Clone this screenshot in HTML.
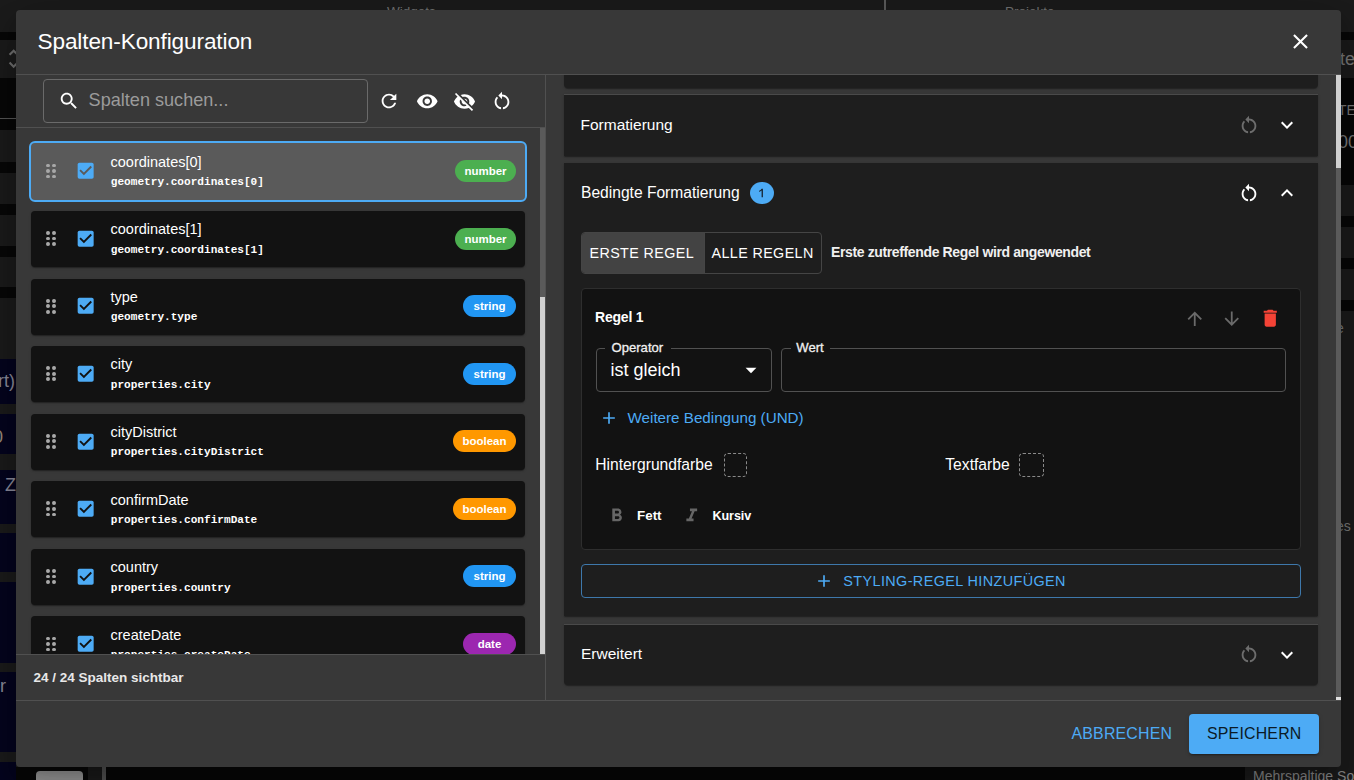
<!DOCTYPE html>
<html><head><meta charset="utf-8"><style>
html,body{margin:0;padding:0;width:1354px;height:780px;overflow:hidden;background:#1b1b1b;font-family:"Liberation Sans",sans-serif}
body div, body svg{position:absolute}
</style></head><body>
<div style="left:0px;top:0px;width:1354px;height:32px;background:#1b1b1b"></div>
<div style="left:387px;top:3.82px;font:400 13.5px/16px 'Liberation Sans', sans-serif;color:#707070;white-space:nowrap;">Widgets</div>
<div style="left:1005px;top:3.82px;font:400 13.5px/16px 'Liberation Sans', sans-serif;color:#707070;white-space:nowrap;">Projekte</div>
<div style="left:884px;top:0px;width:2px;height:10px;background:#5a5a5a"></div>
<div style="left:0px;top:32px;width:1354px;height:8px;background:#080808"></div>
<div style="left:0px;top:40px;width:1354px;height:38px;background:#1b1b1b"></div>
<div style="left:0px;top:78px;width:1354px;height:52px;background:#080808"></div>
<div style="left:0px;top:118px;width:16px;height:1px;background:#555"></div>
<div style="left:0px;top:119px;width:1354px;height:11px;background:#080808"></div>
<div style="left:0px;top:130px;width:16px;height:32px;background:#1b1b1b"></div>
<div style="left:0px;top:162px;width:16px;height:11px;background:#080808"></div>
<div style="left:0px;top:173px;width:16px;height:31px;background:#1b1b1b"></div>
<div style="left:0px;top:204px;width:16px;height:11px;background:#080808"></div>
<div style="left:0px;top:215px;width:16px;height:31px;background:#1b1b1b"></div>
<div style="left:0px;top:246px;width:16px;height:11px;background:#080808"></div>
<div style="left:0px;top:257px;width:16px;height:30px;background:#1b1b1b"></div>
<div style="left:0px;top:287px;width:16px;height:11px;background:#080808"></div>
<div style="left:0px;top:298px;width:16px;height:61px;background:#1b1b1b"></div>
<div style="left:0px;top:359px;width:16px;height:421px;background:#05051e"></div>
<div style="left:0px;top:404px;width:16px;height:10px;background:#1b1b1b"></div>
<div style="left:0px;top:454px;width:16px;height:16px;background:#1b1b1b"></div>
<div style="left:0px;top:524px;width:16px;height:9px;background:#1b1b1b"></div>
<div style="left:0px;top:572px;width:16px;height:10px;background:#1b1b1b"></div>
<div style="left:0px;top:663px;width:16px;height:9px;background:#1b1b1b"></div>
<div style="left:0px;top:752px;width:16px;height:10px;background:#1b1b1b"></div>
<div style="left:1341px;top:130px;width:13px;height:55px;background:#080808"></div>
<div style="left:1341px;top:185px;width:13px;height:595px;background:#1b1b1b"></div>
<div style="left:1341px;top:216px;width:13px;height:11px;background:#080808"></div>
<div style="left:1341px;top:258px;width:13px;height:11px;background:#080808"></div>
<div style="left:1341px;top:300px;width:13px;height:11px;background:#080808"></div>
<div style="left:1340px;top:47.76px;font:400 18px/22px 'Liberation Sans', sans-serif;color:#777;white-space:nowrap;">te</div>
<div style="left:1338px;top:101.65px;font:400 14px/17px 'Liberation Sans', sans-serif;color:#777;white-space:nowrap;">TE</div>
<div style="left:1338px;top:130.76px;font:400 18px/22px 'Liberation Sans', sans-serif;color:#777;white-space:nowrap;">00</div>
<div style="left:1336px;top:319.65px;font:400 14px/17px 'Liberation Sans', sans-serif;color:#777;white-space:nowrap;">e</div>
<div style="left:1336px;top:517.65px;font:400 14px/17px 'Liberation Sans', sans-serif;color:#777;white-space:nowrap;">es</div>
<div style="left:-2px;top:369.76px;font:400 18px/22px 'Liberation Sans', sans-serif;color:#8a8a9a;white-space:nowrap;">rt)</div>
<div style="left:-7px;top:425.76px;font:400 18px/22px 'Liberation Sans', sans-serif;color:#9a8a7a;white-space:nowrap;">0</div>
<div style="left:5px;top:473.76px;font:400 18px/22px 'Liberation Sans', sans-serif;color:#8a8a9a;white-space:nowrap;">Z</div>
<div style="left:0px;top:674.76px;font:400 18px/22px 'Liberation Sans', sans-serif;color:#8a8a9a;white-space:nowrap;">r</div>
<svg style="left:0.7px;top:45.8px;width:25.3px;height:25.3px;" viewBox="0 0 24 24"><path fill="#6f6f6f" d="M12 5.83 15.17 9l1.41-1.41L12 3 7.41 7.59 8.83 9 12 5.83zm0 12.34L8.83 15l-1.42 1.41L12 21l4.59-4.59L15.17 15 12 18.17z"/></svg>
<div style="left:0px;top:767px;width:1354px;height:13px;background:#080808"></div>
<div style="left:0px;top:767px;width:16px;height:13px;background:#05051e"></div>
<div style="left:36px;top:771px;width:47px;height:20px;background:#9a9a9a;border-radius:4px"></div>
<div style="left:88px;top:767px;width:14px;height:13px;background:#1b1b1b"></div>
<div style="left:102px;top:767px;width:4px;height:13px;background:#555"></div>
<div style="left:1245px;top:767px;width:109px;height:13px;background:#1b1b1b"></div>
<div style="left:1253px;top:767.65px;font:400 14px/17px 'Liberation Sans', sans-serif;color:#8a8a8a;white-space:nowrap;">Mehrspaltige Sortierung</div>
<div style="left:16px;top:10px;width:1325px;height:757px;background:#383838;border-radius:4px;box-shadow:0 11px 15px -7px rgba(0,0,0,.2),0 24px 38px 3px rgba(0,0,0,.14),0 9px 46px 8px rgba(0,0,0,.12)"></div>
<div style="left:37.5px;top:27.67px;font:400 22.6px/27px 'Liberation Sans', sans-serif;color:#fff;white-space:nowrap;letter-spacing:-0.12px;">Spalten-Konfiguration</div>
<svg style="left:1288px;top:29px;width:25px;height:25px;" viewBox="0 0 24 24"><path fill="#fff" d="M19 6.41 17.59 5 12 10.59 6.41 5 5 6.41 10.59 12 5 17.59 6.41 19 12 13.41 17.59 19 19 17.59 13.41 12z"/></svg>
<div style="left:16px;top:74px;width:1325px;height:1px;background:#505050"></div>
<div style="left:43px;top:79px;width:323px;height:42px;border:1px solid #6a6a6a;border-radius:4px"></div>
<svg style="left:58px;top:90.2px;width:22px;height:22px;" viewBox="0 0 24 24"><path fill="#fff" d="M15.5 14h-.79l-.28-.27C15.41 12.59 16 11.11 16 9.5 16 5.91 13.09 3 9.5 3S3 5.91 3 9.5 5.91 16 9.5 16c1.61 0 3.09-.59 4.23-1.57l.27.28v.79l5 4.99L20.49 19l-4.99-5zm-6 0C7.01 14 5 11.99 5 9.5S7.01 5 9.5 5 14 7.01 14 9.5 11.99 14 9.5 14z"/></svg>
<div style="left:88.6px;top:89.03px;font:400 18.1px/22px 'Liberation Sans', sans-serif;color:#9b9b9b;white-space:nowrap;">Spalten suchen...</div>
<svg style="left:378.15px;top:90.35px;width:22px;height:22px;" viewBox="0 0 24 24"><path fill="#fff" d="M17.65 6.35C16.2 4.9 14.21 4 12 4c-4.42 0-7.99 3.58-7.99 8s3.57 8 7.99 8c3.73 0 6.84-2.55 7.73-6h-2.08c-.82 2.33-3.04 4-5.65 4-3.31 0-6-2.69-6-6s2.69-6 6-6c1.66 0 3.14.69 4.22 1.78L13 11h7V4l-2.35 2.35z"/></svg>
<svg style="left:416px;top:90px;width:22.5px;height:22.5px;" viewBox="0 0 24 24"><path fill="#fff" d="M12 4.5C7 4.5 2.73 7.61 1 12c1.73 4.39 6 7.5 11 7.5s9.27-3.11 11-7.5c-1.73-4.39-6-7.5-11-7.5zM12 17c-2.76 0-5-2.24-5-5s2.24-5 5-5 5 2.24 5 5-2.24 5-5 5zm0-8c-1.66 0-3 1.34-3 3s1.34 3 3 3 3-1.34 3-3-1.34-3-3-3z"/></svg>
<svg style="left:452.5px;top:89.5px;width:23px;height:23px;" viewBox="0 0 24 24"><path fill="#fff" d="M12 7c2.76 0 5 2.24 5 5 0 .65-.13 1.26-.36 1.83l2.92 2.92c1.51-1.26 2.7-2.89 3.43-4.75-1.73-4.39-6-7.5-11-7.5-1.4 0-2.74.25-3.98.7l2.16 2.16C10.74 7.13 11.35 7 12 7zM2 4.27l2.28 2.28.46.46C3.08 8.3 1.78 10.02 1 12c1.73 4.39 6 7.5 11 7.5 1.55 0 3.03-.3 4.38-.84l.42.42L19.73 22 21 20.73 3.27 3 2 4.27zM7.53 9.8l1.55 1.55c-.05.21-.08.43-.08.65 0 1.66 1.34 3 3 3 .22 0 .44-.03.65-.08l1.55 1.55c-.67.33-1.41.53-2.2.53-2.76 0-5-2.24-5-5 0-.79.2-1.53.53-2.2zm4.31-.78 3.15 3.15.02-.16c0-1.66-1.34-3-3-3l-.17.01z"/></svg>
<svg style="left:491.15px;top:90.2px;width:22px;height:22px;" viewBox="0 0 24 24"><path fill="#fff" d="M12 5V2L8 6l4 4V7c3.31 0 6 2.69 6 6 0 2.97-2.17 5.43-5 5.91v2.02c3.95-.49 7-3.85 7-7.93 0-4.42-3.58-8-8-8zm-6 8c0-1.65.67-3.15 1.76-4.24L6.34 7.34C4.9 8.79 4 10.79 4 13c0 4.08 3.05 7.44 7 7.93v-2.02c-2.83-.48-5-2.94-5-5.91z"/></svg>
<div style="left:16px;top:127px;width:529px;height:1px;background:#505050"></div>
<div style="left:545px;top:75px;width:1px;height:625px;background:#505050"></div>
<div style="left:16px;top:128px;width:524px;height:526px;overflow:hidden">
<div style="left:13px;top:13px;width:498px;height:61px;box-sizing:border-box;border:2px solid #4dabf5;border-radius:6px;background:#5a5a5a"></div>
<div style="left:30.300000000000004px;top:35.599999999999994px;width:3.8px;height:3.8px;background:#a8a8a8;border-radius:50%"></div>
<div style="left:30.300000000000004px;top:41.099999999999994px;width:3.8px;height:3.8px;background:#a8a8a8;border-radius:50%"></div>
<div style="left:30.300000000000004px;top:46.69999999999999px;width:3.8px;height:3.8px;background:#a8a8a8;border-radius:50%"></div>
<div style="left:35.800000000000004px;top:35.599999999999994px;width:3.8px;height:3.8px;background:#a8a8a8;border-radius:50%"></div>
<div style="left:35.800000000000004px;top:41.099999999999994px;width:3.8px;height:3.8px;background:#a8a8a8;border-radius:50%"></div>
<div style="left:35.800000000000004px;top:46.69999999999999px;width:3.8px;height:3.8px;background:#a8a8a8;border-radius:50%"></div>
<svg style="left:59.3px;top:32.30px;width:21.33px;height:21.33px" viewBox="0 0 24 24"><rect x="3" y="3" width="18" height="18" rx="2" fill="#4dabf5"/><path fill="none" stroke="#5a5a5a" stroke-width="2.1" d="M5.7 11.3 10 15.6 18.3 7.3"/></svg>
<div style="left:94.5px;top:25.68px;font:400 14.5px/17px 'Liberation Sans', sans-serif;color:#fff;white-space:nowrap;">coordinates[0]</div>
<div style="left:94.8px;top:48.14px;font:700 11.1px/13px 'Liberation Mono', monospace;color:#fff;white-space:nowrap;">geometry.coordinates[0]</div>
<div style="left:439px;top:32.0px;width:61px;height:22px;background:#4caf50;border-radius:11px"></div>
<div style="left:439px;top:32.00px;width:61px;height:22px;font:700 11.5px/22px 'Liberation Sans',sans-serif;color:#fff;text-align:center">number</div>
<div style="left:15px;top:83px;width:494px;height:56px;background:#121212;border-radius:4px;box-shadow:0 2px 1px -1px rgba(0,0,0,.2),0 1px 1px 0 rgba(0,0,0,.14),0 1px 3px 0 rgba(0,0,0,.12)"></div>
<div style="left:30.300000000000004px;top:103.16999999999999px;width:3.8px;height:3.8px;background:#a8a8a8;border-radius:50%"></div>
<div style="left:30.300000000000004px;top:108.66999999999999px;width:3.8px;height:3.8px;background:#a8a8a8;border-radius:50%"></div>
<div style="left:30.300000000000004px;top:114.26999999999998px;width:3.8px;height:3.8px;background:#a8a8a8;border-radius:50%"></div>
<div style="left:35.800000000000004px;top:103.16999999999999px;width:3.8px;height:3.8px;background:#a8a8a8;border-radius:50%"></div>
<div style="left:35.800000000000004px;top:108.66999999999999px;width:3.8px;height:3.8px;background:#a8a8a8;border-radius:50%"></div>
<div style="left:35.800000000000004px;top:114.26999999999998px;width:3.8px;height:3.8px;background:#a8a8a8;border-radius:50%"></div>
<svg style="left:59.3px;top:99.87px;width:21.33px;height:21.33px" viewBox="0 0 24 24"><rect x="3" y="3" width="18" height="18" rx="2" fill="#4dabf5"/><path fill="none" stroke="#121212" stroke-width="2.1" d="M5.7 11.3 10 15.6 18.3 7.3"/></svg>
<div style="left:94.5px;top:93.25px;font:400 14.5px/17px 'Liberation Sans', sans-serif;color:#fff;white-space:nowrap;">coordinates[1]</div>
<div style="left:94.8px;top:115.71px;font:700 11.1px/13px 'Liberation Mono', monospace;color:#fff;white-space:nowrap;">geometry.coordinates[1]</div>
<div style="left:439px;top:99.57px;width:61px;height:22px;background:#4caf50;border-radius:11px"></div>
<div style="left:439px;top:99.57px;width:61px;height:22px;font:700 11.5px/22px 'Liberation Sans',sans-serif;color:#fff;text-align:center">number</div>
<div style="left:15px;top:151px;width:494px;height:56px;background:#121212;border-radius:4px;box-shadow:0 2px 1px -1px rgba(0,0,0,.2),0 1px 1px 0 rgba(0,0,0,.14),0 1px 3px 0 rgba(0,0,0,.12)"></div>
<div style="left:30.300000000000004px;top:170.74px;width:3.8px;height:3.8px;background:#a8a8a8;border-radius:50%"></div>
<div style="left:30.300000000000004px;top:176.24px;width:3.8px;height:3.8px;background:#a8a8a8;border-radius:50%"></div>
<div style="left:30.300000000000004px;top:181.84000000000003px;width:3.8px;height:3.8px;background:#a8a8a8;border-radius:50%"></div>
<div style="left:35.800000000000004px;top:170.74px;width:3.8px;height:3.8px;background:#a8a8a8;border-radius:50%"></div>
<div style="left:35.800000000000004px;top:176.24px;width:3.8px;height:3.8px;background:#a8a8a8;border-radius:50%"></div>
<div style="left:35.800000000000004px;top:181.84000000000003px;width:3.8px;height:3.8px;background:#a8a8a8;border-radius:50%"></div>
<svg style="left:59.3px;top:167.44px;width:21.33px;height:21.33px" viewBox="0 0 24 24"><rect x="3" y="3" width="18" height="18" rx="2" fill="#4dabf5"/><path fill="none" stroke="#121212" stroke-width="2.1" d="M5.7 11.3 10 15.6 18.3 7.3"/></svg>
<div style="left:94.5px;top:160.82px;font:400 14.5px/17px 'Liberation Sans', sans-serif;color:#fff;white-space:nowrap;">type</div>
<div style="left:94.8px;top:183.28px;font:700 11.1px/13px 'Liberation Mono', monospace;color:#fff;white-space:nowrap;">geometry.type</div>
<div style="left:447px;top:167.14px;width:53px;height:22px;background:#2196f3;border-radius:11px"></div>
<div style="left:447px;top:167.14px;width:53px;height:22px;font:700 11.5px/22px 'Liberation Sans',sans-serif;color:#fff;text-align:center">string</div>
<div style="left:15px;top:218px;width:494px;height:56px;background:#121212;border-radius:4px;box-shadow:0 2px 1px -1px rgba(0,0,0,.2),0 1px 1px 0 rgba(0,0,0,.14),0 1px 3px 0 rgba(0,0,0,.12)"></div>
<div style="left:30.300000000000004px;top:238.31px;width:3.8px;height:3.8px;background:#a8a8a8;border-radius:50%"></div>
<div style="left:30.300000000000004px;top:243.81px;width:3.8px;height:3.8px;background:#a8a8a8;border-radius:50%"></div>
<div style="left:30.300000000000004px;top:249.40999999999997px;width:3.8px;height:3.8px;background:#a8a8a8;border-radius:50%"></div>
<div style="left:35.800000000000004px;top:238.31px;width:3.8px;height:3.8px;background:#a8a8a8;border-radius:50%"></div>
<div style="left:35.800000000000004px;top:243.81px;width:3.8px;height:3.8px;background:#a8a8a8;border-radius:50%"></div>
<div style="left:35.800000000000004px;top:249.40999999999997px;width:3.8px;height:3.8px;background:#a8a8a8;border-radius:50%"></div>
<svg style="left:59.3px;top:235.01px;width:21.33px;height:21.33px" viewBox="0 0 24 24"><rect x="3" y="3" width="18" height="18" rx="2" fill="#4dabf5"/><path fill="none" stroke="#121212" stroke-width="2.1" d="M5.7 11.3 10 15.6 18.3 7.3"/></svg>
<div style="left:94.5px;top:228.39px;font:400 14.5px/17px 'Liberation Sans', sans-serif;color:#fff;white-space:nowrap;">city</div>
<div style="left:94.8px;top:250.85px;font:700 11.1px/13px 'Liberation Mono', monospace;color:#fff;white-space:nowrap;">properties.city</div>
<div style="left:447px;top:234.70999999999998px;width:53px;height:22px;background:#2196f3;border-radius:11px"></div>
<div style="left:447px;top:234.71px;width:53px;height:22px;font:700 11.5px/22px 'Liberation Sans',sans-serif;color:#fff;text-align:center">string</div>
<div style="left:15px;top:286px;width:494px;height:56px;background:#121212;border-radius:4px;box-shadow:0 2px 1px -1px rgba(0,0,0,.2),0 1px 1px 0 rgba(0,0,0,.14),0 1px 3px 0 rgba(0,0,0,.12)"></div>
<div style="left:30.300000000000004px;top:305.88px;width:3.8px;height:3.8px;background:#a8a8a8;border-radius:50%"></div>
<div style="left:30.300000000000004px;top:311.38px;width:3.8px;height:3.8px;background:#a8a8a8;border-radius:50%"></div>
<div style="left:30.300000000000004px;top:316.98px;width:3.8px;height:3.8px;background:#a8a8a8;border-radius:50%"></div>
<div style="left:35.800000000000004px;top:305.88px;width:3.8px;height:3.8px;background:#a8a8a8;border-radius:50%"></div>
<div style="left:35.800000000000004px;top:311.38px;width:3.8px;height:3.8px;background:#a8a8a8;border-radius:50%"></div>
<div style="left:35.800000000000004px;top:316.98px;width:3.8px;height:3.8px;background:#a8a8a8;border-radius:50%"></div>
<svg style="left:59.3px;top:302.58px;width:21.33px;height:21.33px" viewBox="0 0 24 24"><rect x="3" y="3" width="18" height="18" rx="2" fill="#4dabf5"/><path fill="none" stroke="#121212" stroke-width="2.1" d="M5.7 11.3 10 15.6 18.3 7.3"/></svg>
<div style="left:94.5px;top:295.96px;font:400 14.5px/17px 'Liberation Sans', sans-serif;color:#fff;white-space:nowrap;">cityDistrict</div>
<div style="left:94.8px;top:318.42px;font:700 11.1px/13px 'Liberation Mono', monospace;color:#fff;white-space:nowrap;">properties.cityDistrict</div>
<div style="left:437px;top:302.28px;width:63px;height:22px;background:#ff9800;border-radius:11px"></div>
<div style="left:437px;top:302.28px;width:63px;height:22px;font:700 11.5px/22px 'Liberation Sans',sans-serif;color:#fff;text-align:center">boolean</div>
<div style="left:15px;top:353px;width:494px;height:56px;background:#121212;border-radius:4px;box-shadow:0 2px 1px -1px rgba(0,0,0,.2),0 1px 1px 0 rgba(0,0,0,.14),0 1px 3px 0 rgba(0,0,0,.12)"></div>
<div style="left:30.300000000000004px;top:373.45px;width:3.8px;height:3.8px;background:#a8a8a8;border-radius:50%"></div>
<div style="left:30.300000000000004px;top:378.95px;width:3.8px;height:3.8px;background:#a8a8a8;border-radius:50%"></div>
<div style="left:30.300000000000004px;top:384.54999999999995px;width:3.8px;height:3.8px;background:#a8a8a8;border-radius:50%"></div>
<div style="left:35.800000000000004px;top:373.45px;width:3.8px;height:3.8px;background:#a8a8a8;border-radius:50%"></div>
<div style="left:35.800000000000004px;top:378.95px;width:3.8px;height:3.8px;background:#a8a8a8;border-radius:50%"></div>
<div style="left:35.800000000000004px;top:384.54999999999995px;width:3.8px;height:3.8px;background:#a8a8a8;border-radius:50%"></div>
<svg style="left:59.3px;top:370.15px;width:21.33px;height:21.33px" viewBox="0 0 24 24"><rect x="3" y="3" width="18" height="18" rx="2" fill="#4dabf5"/><path fill="none" stroke="#121212" stroke-width="2.1" d="M5.7 11.3 10 15.6 18.3 7.3"/></svg>
<div style="left:94.5px;top:363.53px;font:400 14.5px/17px 'Liberation Sans', sans-serif;color:#fff;white-space:nowrap;">confirmDate</div>
<div style="left:94.8px;top:385.99px;font:700 11.1px/13px 'Liberation Mono', monospace;color:#fff;white-space:nowrap;">properties.confirmDate</div>
<div style="left:437px;top:369.84999999999997px;width:63px;height:22px;background:#ff9800;border-radius:11px"></div>
<div style="left:437px;top:369.85px;width:63px;height:22px;font:700 11.5px/22px 'Liberation Sans',sans-serif;color:#fff;text-align:center">boolean</div>
<div style="left:15px;top:421px;width:494px;height:56px;background:#121212;border-radius:4px;box-shadow:0 2px 1px -1px rgba(0,0,0,.2),0 1px 1px 0 rgba(0,0,0,.14),0 1px 3px 0 rgba(0,0,0,.12)"></div>
<div style="left:30.300000000000004px;top:441.02px;width:3.8px;height:3.8px;background:#a8a8a8;border-radius:50%"></div>
<div style="left:30.300000000000004px;top:446.52px;width:3.8px;height:3.8px;background:#a8a8a8;border-radius:50%"></div>
<div style="left:30.300000000000004px;top:452.12px;width:3.8px;height:3.8px;background:#a8a8a8;border-radius:50%"></div>
<div style="left:35.800000000000004px;top:441.02px;width:3.8px;height:3.8px;background:#a8a8a8;border-radius:50%"></div>
<div style="left:35.800000000000004px;top:446.52px;width:3.8px;height:3.8px;background:#a8a8a8;border-radius:50%"></div>
<div style="left:35.800000000000004px;top:452.12px;width:3.8px;height:3.8px;background:#a8a8a8;border-radius:50%"></div>
<svg style="left:59.3px;top:437.72px;width:21.33px;height:21.33px" viewBox="0 0 24 24"><rect x="3" y="3" width="18" height="18" rx="2" fill="#4dabf5"/><path fill="none" stroke="#121212" stroke-width="2.1" d="M5.7 11.3 10 15.6 18.3 7.3"/></svg>
<div style="left:94.5px;top:431.10px;font:400 14.5px/17px 'Liberation Sans', sans-serif;color:#fff;white-space:nowrap;">country</div>
<div style="left:94.8px;top:453.56px;font:700 11.1px/13px 'Liberation Mono', monospace;color:#fff;white-space:nowrap;">properties.country</div>
<div style="left:447px;top:437.41999999999996px;width:53px;height:22px;background:#2196f3;border-radius:11px"></div>
<div style="left:447px;top:437.42px;width:53px;height:22px;font:700 11.5px/22px 'Liberation Sans',sans-serif;color:#fff;text-align:center">string</div>
<div style="left:15px;top:488px;width:494px;height:56px;background:#121212;border-radius:4px;box-shadow:0 2px 1px -1px rgba(0,0,0,.2),0 1px 1px 0 rgba(0,0,0,.14),0 1px 3px 0 rgba(0,0,0,.12)"></div>
<div style="left:30.300000000000004px;top:508.59000000000003px;width:3.8px;height:3.8px;background:#a8a8a8;border-radius:50%"></div>
<div style="left:30.300000000000004px;top:514.09px;width:3.8px;height:3.8px;background:#a8a8a8;border-radius:50%"></div>
<div style="left:30.300000000000004px;top:519.6899999999999px;width:3.8px;height:3.8px;background:#a8a8a8;border-radius:50%"></div>
<div style="left:35.800000000000004px;top:508.59000000000003px;width:3.8px;height:3.8px;background:#a8a8a8;border-radius:50%"></div>
<div style="left:35.800000000000004px;top:514.09px;width:3.8px;height:3.8px;background:#a8a8a8;border-radius:50%"></div>
<div style="left:35.800000000000004px;top:519.6899999999999px;width:3.8px;height:3.8px;background:#a8a8a8;border-radius:50%"></div>
<svg style="left:59.3px;top:505.29px;width:21.33px;height:21.33px" viewBox="0 0 24 24"><rect x="3" y="3" width="18" height="18" rx="2" fill="#4dabf5"/><path fill="none" stroke="#121212" stroke-width="2.1" d="M5.7 11.3 10 15.6 18.3 7.3"/></svg>
<div style="left:94.5px;top:498.67px;font:400 14.5px/17px 'Liberation Sans', sans-serif;color:#fff;white-space:nowrap;">createDate</div>
<div style="left:94.8px;top:521.13px;font:700 11.1px/13px 'Liberation Mono', monospace;color:#fff;white-space:nowrap;">properties.createDate</div>
<div style="left:447px;top:504.99px;width:53px;height:22px;background:#9c27b0;border-radius:11px"></div>
<div style="left:447px;top:504.99px;width:53px;height:22px;font:700 11.5px/22px 'Liberation Sans',sans-serif;color:#fff;text-align:center">date</div>
</div>
<div style="left:540px;top:128px;width:5px;height:526px;background:#d0d0d0"></div>
<div style="left:540px;top:128px;width:5px;height:169px;background:#5a5a5a"></div>
<div style="left:16px;top:654px;width:529px;height:1px;background:#505050"></div>
<div style="left:33.5px;top:670.32px;font:700 13.5px/16px 'Liberation Sans', sans-serif;color:#e8e8e8;white-space:nowrap;">24 / 24 Spalten sichtbar</div>
<div style="left:546px;top:75px;width:790px;height:625px;overflow:hidden">
<div style="left:18px;top:-35px;width:754px;height:47.5px;background:#1e1e1e;box-shadow:0 2px 1px -1px rgba(0,0,0,.2),0 1px 1px 0 rgba(0,0,0,.14),0 1px 3px 0 rgba(0,0,0,.12);border-radius:0 0 4px 4px"></div>
<div style="left:18px;top:19px;width:754px;height:61.5px;background:#1e1e1e;box-shadow:0 2px 1px -1px rgba(0,0,0,.2),0 1px 1px 0 rgba(0,0,0,.14),0 1px 3px 0 rgba(0,0,0,.12)"></div>
<div style="left:18px;top:19px;width:754px;height:1px;background:#4a4a4a"></div>
<div style="left:34.5px;top:40.03px;font:400 15.5px/19px 'Liberation Sans', sans-serif;color:#fff;white-space:nowrap;">Formatierung</div>
<svg style="left:691.9000000000001px;top:38.900000000000006px;width:22px;height:22px;" viewBox="0 0 24 24"><path fill="#6d6d6d" d="M12 5V2L8 6l4 4V7c3.31 0 6 2.69 6 6 0 2.97-2.17 5.43-5 5.91v2.02c3.95-.49 7-3.85 7-7.93 0-4.42-3.58-8-8-8zm-6 8c0-1.65.67-3.15 1.76-4.24L6.34 7.34C4.9 8.79 4 10.79 4 13c0 4.08 3.05 7.44 7 7.93v-2.02c-2.83-.48-5-2.94-5-5.91z"/></svg>
<svg style="left:729.3px;top:38.2px;width:24px;height:24px;" viewBox="0 0 24 24"><path fill="#fff" d="M16.59 8.59 12 13.17 7.41 8.59 6 10l6 6 6-6z"/></svg>
<div style="left:18px;top:88px;width:754px;height:453px;background:#1e1e1e;box-shadow:0 2px 1px -1px rgba(0,0,0,.2),0 1px 1px 0 rgba(0,0,0,.14),0 1px 3px 0 rgba(0,0,0,.12)"></div>
<div style="left:35px;top:107.79px;font:400 15.6px/19px 'Liberation Sans', sans-serif;color:#fff;white-space:nowrap;">Bedingte Formatierung</div>
<div style="left:204px;top:106.80000000000001px;width:24px;height:22.5px;background:#4dabf5;border-radius:50%"></div>
<svg style="left:211px;top:113px;width:8px;height:10px" viewBox="0 0 8 10"><path fill="#152230" d="M4.6 0.8H5.9V9.2H4.6V2.6C4 3.2 3.1 3.7 2.2 4V2.8C3.2 2.4 4 1.7 4.6 0.8z"/></svg>
<svg style="left:691.9000000000001px;top:106.9px;width:22px;height:22px;" viewBox="0 0 24 24"><path fill="#fff" d="M12 5V2L8 6l4 4V7c3.31 0 6 2.69 6 6 0 2.97-2.17 5.43-5 5.91v2.02c3.95-.49 7-3.85 7-7.93 0-4.42-3.58-8-8-8zm-6 8c0-1.65.67-3.15 1.76-4.24L6.34 7.34C4.9 8.79 4 10.79 4 13c0 4.08 3.05 7.44 7 7.93v-2.02c-2.83-.48-5-2.94-5-5.91z"/></svg>
<svg style="left:729.3px;top:106px;width:24px;height:24px;" viewBox="0 0 24 24"><path fill="#fff" d="m12 8-6 6 1.41 1.41L12 10.83l4.59 4.58L18 14z"/></svg>
<div style="left:35px;top:157px;width:241px;height:41.5px;box-sizing:border-box;border:1px solid #454545;border-radius:4px"></div>
<div style="left:36px;top:158px;width:121.7px;height:39.5px;background:#434343;border-radius:3px 0 0 3px"></div>
<div style="left:157.70000000000005px;top:157px;width:1px;height:41.5px;background:#454545"></div>
<div style="left:43.5px;top:169.75px;font:400 14.3px/17px 'Liberation Sans', sans-serif;color:#fff;white-space:nowrap;letter-spacing:0.4px;">ERSTE REGEL</div>
<div style="left:165.5px;top:169.75px;font:400 14.3px/17px 'Liberation Sans', sans-serif;color:#fff;white-space:nowrap;letter-spacing:0.4px;">ALLE REGELN</div>
<div style="left:285px;top:168.85px;font:700 14px/17px 'Liberation Sans', sans-serif;color:#f0f0f0;white-space:nowrap;letter-spacing:-0.37px;">Erste zutreffende Regel wird angewendet</div>
<div style="left:35px;top:213px;width:720px;height:262px;box-sizing:border-box;background:#121212;border:1px solid #2e2e2e;border-radius:4px"></div>
<div style="left:49px;top:233.95px;font:700 14px/17px 'Liberation Sans', sans-serif;color:#fff;white-space:nowrap;letter-spacing:-0.2px;">Regel 1</div>
<svg style="left:638.2px;top:232.5px;width:21.5px;height:21.5px;" viewBox="0 0 24 24"><path fill="#6a6a6a" d="M4 12l1.41 1.41L11 7.83V20h2V7.83l5.58 5.59L20 12l-8-8-8 8z"/></svg>
<svg style="left:675.2px;top:232.5px;width:21.5px;height:21.5px;" viewBox="0 0 24 24"><path fill="#6a6a6a" d="M20 12l-1.41-1.41L13 16.17V4h-2v12.17l-5.58-5.59L4 12l8 8 8-8z"/></svg>
<svg style="left:712.75px;top:231.85000000000002px;width:22.5px;height:22.5px;" viewBox="0 0 24 24"><path fill="#f44336" d="M6 19c0 1.1.9 2 2 2h8c1.1 0 2-.9 2-2V7H6v12zM19 4h-3.5l-1-1h-5l-1 1H5v2h14V4z"/></svg>
<div style="left:50px;top:273px;width:176px;height:43.5px;box-sizing:border-box;border:1px solid #515151;border-radius:4px"></div>
<div style="left:59px;top:271px;width:65.5px;height:4px;background:#121212"></div>
<div style="left:65.5px;top:265.16px;font:400 13.1px/16px 'Liberation Sans', sans-serif;color:#f0f0f0;white-space:nowrap;-webkit-text-stroke:0.3px #f0f0f0;">Operator</div>
<div style="left:64.5px;top:284.16px;font:400 18px/22px 'Liberation Sans', sans-serif;color:#fff;white-space:nowrap;">ist gleich</div>
<svg style="left:192px;top:282px;width:26px;height:26px;" viewBox="0 0 24 24"><path fill="#fff" d="M7 10l5 5 5-5z"/></svg>
<div style="left:235px;top:273px;width:505px;height:43.5px;box-sizing:border-box;border:1px solid #515151;border-radius:4px"></div>
<div style="left:244.5px;top:271px;width:39.5px;height:4px;background:#121212"></div>
<div style="left:250.29999999999995px;top:265.16px;font:400 13.1px/16px 'Liberation Sans', sans-serif;color:#f0f0f0;white-space:nowrap;-webkit-text-stroke:0.3px #f0f0f0;">Wert</div>
<svg style="left:53px;top:333px;width:20px;height:20px;" viewBox="0 0 24 24"><path fill="#4dabf5" d="M19 13h-6v6h-2v-6H5v-2h6V5h2v6h6v2z"/></svg>
<div style="left:81.5px;top:333.63px;font:400 15.2px/18px 'Liberation Sans', sans-serif;color:#4dabf5;white-space:nowrap;">Weitere Bedingung (UND)</div>
<div style="left:49.299999999999955px;top:380.28px;font:400 15.65px/19px 'Liberation Sans', sans-serif;color:#fff;white-space:nowrap;">Hintergrundfarbe</div>
<div style="left:177.5px;top:378px;width:23.5px;height:23.5px;box-sizing:border-box;border:1px dashed #8a8a8a;border-radius:4px"></div>
<div style="left:399.29999999999995px;top:380.28px;font:400 15.65px/19px 'Liberation Sans', sans-serif;color:#fff;white-space:nowrap;">Textfarbe</div>
<div style="left:473px;top:378px;width:25px;height:24px;box-sizing:border-box;border:1px dashed #8a8a8a;border-radius:4px"></div>
<svg style="left:59.799999999999955px;top:429.8px;width:21.5px;height:21.5px;" viewBox="0 0 24 24"><path fill="#666" d="M15.6 10.79c.97-.67 1.65-1.77 1.65-2.79 0-2.26-1.75-4-4-4H7v14h7.04c2.09 0 3.71-1.7 3.71-3.79 0-1.52-.86-2.82-2.15-3.42zM10 6.5h3c.83 0 1.5.67 1.5 1.5s-.67 1.5-1.5 1.5h-3v-3zm3.5 9H10v-3h3.5c.83 0 1.5.67 1.5 1.5s-.67 1.5-1.5 1.5z"/></svg>
<div style="left:91px;top:433.26px;font:700 13.4px/16px 'Liberation Sans', sans-serif;color:#fff;white-space:nowrap;">Fett</div>
<svg style="left:134.79999999999995px;top:429.8px;width:21.5px;height:21.5px;" viewBox="0 0 24 24"><path fill="#666" d="M10 4v3h2.21l-3.42 8H6v3h8v-3h-2.21l3.42-8H18V4z"/></svg>
<div style="left:166.5px;top:434.03px;font:700 12.6px/15px 'Liberation Sans', sans-serif;color:#fff;white-space:nowrap;letter-spacing:-0.1px;">Kursiv</div>
<div style="left:35px;top:489.29999999999995px;width:720px;height:33.5px;box-sizing:border-box;border:1px solid #3e78ab;border-radius:4px"></div>
<svg style="left:268px;top:495.5px;width:20px;height:20px;" viewBox="0 0 24 24"><path fill="#4dabf5" d="M19 13h-6v6h-2v-6H5v-2h6V5h2v6h6v2z"/></svg>
<div style="left:297.29999999999995px;top:497.51px;font:400 14.4px/17px 'Liberation Sans', sans-serif;color:#4dabf5;white-space:nowrap;letter-spacing:0.4px;">STYLING-REGEL HINZUFÜGEN</div>
<div style="left:18px;top:548.5px;width:754px;height:61px;background:#1e1e1e;box-shadow:0 2px 1px -1px rgba(0,0,0,.2),0 1px 1px 0 rgba(0,0,0,.14),0 1px 3px 0 rgba(0,0,0,.12);border-radius:0 0 4px 4px"></div>
<div style="left:18px;top:548.5px;width:754px;height:1px;background:#4a4a4a"></div>
<div style="left:35px;top:569.13px;font:400 15.5px/19px 'Liberation Sans', sans-serif;color:#fff;white-space:nowrap;">Erweitert</div>
<svg style="left:691.9000000000001px;top:568.3px;width:22px;height:22px;" viewBox="0 0 24 24"><path fill="#6d6d6d" d="M12 5V2L8 6l4 4V7c3.31 0 6 2.69 6 6 0 2.97-2.17 5.43-5 5.91v2.02c3.95-.49 7-3.85 7-7.93 0-4.42-3.58-8-8-8zm-6 8c0-1.65.67-3.15 1.76-4.24L6.34 7.34C4.9 8.79 4 10.79 4 13c0 4.08 3.05 7.44 7 7.93v-2.02c-2.83-.48-5-2.94-5-5.91z"/></svg>
<svg style="left:729.3px;top:567.5px;width:24px;height:24px;" viewBox="0 0 24 24"><path fill="#fff" d="M16.59 8.59 12 13.17 7.41 8.59 6 10l6 6 6-6z"/></svg>
</div>
<div style="left:1336px;top:75px;width:5px;height:625px;background:#5a5a5a"></div>
<div style="left:1336px;top:75px;width:5px;height:93px;background:#d0d0d0"></div>
<div style="left:1336px;top:697px;width:5px;height:3px;background:#e0e0e0"></div>
<div style="left:16px;top:700px;width:1325px;height:1px;background:#505050"></div>
<div style="left:1071.5px;top:723.99px;font:400 15.9px/19px 'Liberation Sans', sans-serif;color:#4dabf5;white-space:nowrap;letter-spacing:0.2px;">ABBRECHEN</div>
<div style="left:1189px;top:714px;width:130px;height:40px;background:#4dabf5;border-radius:4px;box-shadow:0 3px 1px -2px rgba(0,0,0,.2),0 2px 2px 0 rgba(0,0,0,.14),0 1px 5px 0 rgba(0,0,0,.12)"></div>
<div style="left:1207px;top:723.99px;font:400 15.9px/19px 'Liberation Sans', sans-serif;color:#0b1a26;white-space:nowrap;letter-spacing:0.2px;">SPEICHERN</div>
</body></html>
